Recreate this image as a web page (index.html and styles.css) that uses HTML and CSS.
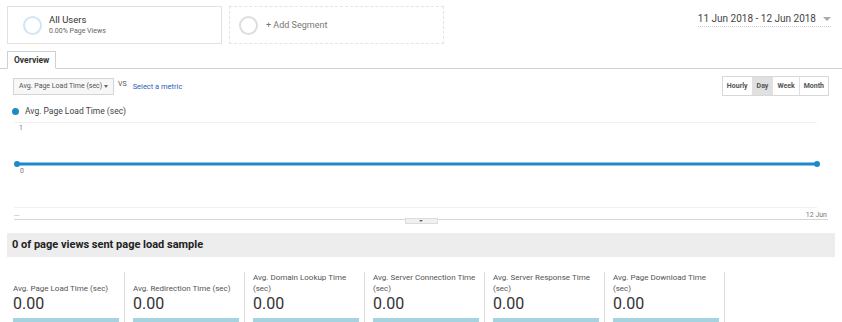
FILE: index.html
```html
<!DOCTYPE html>
<html lang="en">
<head>
  <meta charset="UTF-8">
  <title>Page Timings</title>
  <link rel="stylesheet" href="styles.css">
</head>
<body>
  <div class="header">
    <div class="segments">
      <div class="segment">
        <span class="seg-circle"></span>
        <div>
          <div class="seg-name">All Users</div>
          <div class="seg-sub">0.00% Page Views</div>
        </div>
      </div>
      <div class="segment add">
        <span class="seg-circle grey"></span>
        <div class="seg-add">+ Add Segment</div>
      </div>
    </div>
    <div class="date-range">
      <span>11 Jun 2018 - 12 Jun 2018</span>
      <span class="caret"></span>
    </div>
  </div>

  <div class="tabs">
    <div class="tab">Overview</div>
  </div>

  <div class="controls">
    <div class="metric-pick">
      <div class="select">Avg. Page Load Time (sec) <span class="mini-caret"></span></div>
      <span class="vs">VS</span>
      <a class="link">Select a metric</a>
    </div>
    <div class="periods">
      <button>Hourly</button>
      <button class="active">Day</button>
      <button>Week</button>
      <button>Month</button>
    </div>
  </div>

  <div class="legend">
    <span class="legend-dot"></span>
    Avg. Page Load Time (sec)
  </div>

  <div class="chart">
    <svg width="814" height="106" viewBox="0 0 814 106">
      <line x1="0" y1="3.5" x2="803" y2="3.5" stroke="#f0f0f0" stroke-width="1"/>
      <line x1="0" y1="88.5" x2="803" y2="88.5" stroke="#f0f0f0" stroke-width="1"/>
      <text x="5" y="11" class="axis">1</text>
      <text x="6" y="54" class="axis">0</text>
      <line x1="3" y1="45" x2="803" y2="45" stroke="#1c8ac7" stroke-width="3"/>
      <circle cx="3" cy="45" r="3" fill="#1c8ac7"/>
      <circle cx="803" cy="45" r="3" fill="#1c8ac7"/>
      <text x="0" y="97" class="axis">...</text>
      <text x="813" y="98" class="axis" text-anchor="end">12 Jun</text>
      <line x1="0" y1="100.5" x2="814" y2="100.5" stroke="#d6d6d6" stroke-width="1"/>
      <rect x="391.5" y="99.5" width="32" height="5" fill="#f1f1f1" stroke="#dcdcdc"/>
      <path d="M405 101 L409 101 L407 103 Z" fill="#666"/>
    </svg>
  </div>

  <div class="summary">0 of page views sent page load sample</div>

  <div class="metrics">
    <div class="metric">
      <div class="metric-label">Avg. Page Load Time (sec)</div>
      <div class="metric-value">0.00</div>
      <div class="spark"></div>
    </div>
    <div class="metric">
      <div class="metric-label">Avg. Redirection Time (sec)</div>
      <div class="metric-value">0.00</div>
      <div class="spark"></div>
    </div>
    <div class="metric">
      <div class="metric-label">Avg. Domain Lookup Time (sec)</div>
      <div class="metric-value">0.00</div>
      <div class="spark"></div>
    </div>
    <div class="metric">
      <div class="metric-label">Avg. Server Connection Time (sec)</div>
      <div class="metric-value">0.00</div>
      <div class="spark"></div>
    </div>
    <div class="metric">
      <div class="metric-label">Avg. Server Response Time (sec)</div>
      <div class="metric-value">0.00</div>
      <div class="spark"></div>
    </div>
    <div class="metric">
      <div class="metric-label">Avg. Page Download Time (sec)</div>
      <div class="metric-value">0.00</div>
      <div class="spark"></div>
    </div>
  </div>
</body>
</html>
```

FILE: styles.css
```css
* {
  margin: 0;
  padding: 0;
  box-sizing: border-box;
}

body {
  font-family: Roboto, 'Liberation Sans', sans-serif;
  color: #333;
  background: white;
  width: 842px;
  overflow: hidden;
}

.header {
  display: flex;
  justify-content: space-between;
  align-items: flex-start;
  padding: 6px 11px 0 7px;
  height: 51px;
}

.segments {
  display: flex;
  gap: 7px;
}

.segment {
  width: 215px;
  height: 38px;
  border: 1px solid #e2e2e2;
  display: flex;
  align-items: center;
  padding-left: 15px;
  gap: 7px;
}

.segment.add {
  border: 1px dashed #e4e4e4;
  padding-left: 9px;
  gap: 8px;
}

.seg-circle {
  width: 19px;
  height: 19px;
  border-radius: 50%;
  border: 2px solid #d3e5f3;
}

.seg-circle.grey {
  border-color: #dedede;
}

.seg-name {
  font-size: 9.5px;
  color: #333;
  line-height: 12px;
}

.seg-sub {
  font-size: 7px;
  color: #666;
  line-height: 10px;
}

.seg-add {
  font-size: 9px;
  color: #777;
}

.date-range {
  display: flex;
  align-items: center;
  gap: 7px;
  font-size: 10px;
  color: #444;
  margin-top: 7px;
  padding-bottom: 2px;
  border-bottom: 1px dotted #ccc;
}

.caret {
  width: 0;
  height: 0;
  border-left: 4px solid transparent;
  border-right: 4px solid transparent;
  border-top: 4px solid #aaa;
}

.tabs {
  display: flex;
  align-items: flex-end;
  border-bottom: 1px solid #d0d0d0;
  padding-left: 7px;
  height: 18px;
}

.tab {
  height: 18px;
  margin-bottom: -1px;
  padding: 0 6px;
  font-size: 8.5px;
  font-weight: 700;
  line-height: 16px;
  color: #333;
  border: 1px solid #d0d0d0;
  border-bottom: 1px solid white;
  background: white;
}

.controls {
  display: flex;
  justify-content: space-between;
  align-items: center;
  padding: 7px 13px 0 13px;
}

.metric-pick {
  display: flex;
  align-items: center;
  gap: 4px;
}

.select {
  width: 101px;
  height: 17px;
  border: 1px solid #d4d4d4;
  background: #f7f7f7;
  font-size: 7px;
  white-space: nowrap;
  color: #555;
  display: flex;
  align-items: center;
  justify-content: space-between;
  padding: 0 5px;
}

.mini-caret {
  width: 0;
  height: 0;
  border-left: 2.5px solid transparent;
  border-right: 2.5px solid transparent;
  border-top: 3px solid #666;
}

.vs {
  font-size: 7px;
  color: #555;
  margin-top: -4px;
}

.link {
  font-size: 7.5px;
  color: #2a62b8;
  margin-left: 2px;
}

.periods {
  display: flex;
  border: 1px solid #d8d8d8;
}

.periods button {
  font-family: inherit;
  font-size: 7px;
  font-weight: 700;
  color: #555;
  background: white;
  border: none;
  border-left: 1px solid #e0e0e0;
  height: 18px;
  padding: 0 4px;
}

.periods button:first-child {
  border-left: none;
}

.periods button.active {
  background: #e0e0e0;
}

.legend {
  display: flex;
  align-items: center;
  gap: 6px;
  font-size: 8.5px;
  color: #444;
  padding-left: 12px;
  margin-top: 8px;
  height: 14px;
}

.legend-dot {
  width: 7px;
  height: 7px;
  border-radius: 50%;
  background: #1c8ac7;
}

.chart {
  padding-left: 14px;
  margin-top: 1px;
  height: 106px;
}

.chart svg {
  display: block;
}

.axis {
  font-family: Roboto, 'Liberation Sans', sans-serif;
  font-size: 7px;
  fill: #777;
}

.summary {
  margin: 8px 7px 0 7px;
  height: 24px;
  background: #ededed;
  font-size: 11px;
  font-weight: 700;
  color: #222;
  line-height: 24px;
  padding-left: 5px;
}

.metrics {
  display: flex;
  padding-left: 5px;
  margin-top: 15px;
}

.metric {
  width: 120px;
  border-right: 1px solid #dcdcdc;
  padding: 0 5px 0 8px;
}

.metric-label {
  font-size: 8px;
  line-height: 10.5px;
  color: #555;
  height: 22px;
  display: flex;
  align-items: flex-end;
}

.metric-value {
  font-size: 16px;
  line-height: 19px;
  color: #333;
}

.spark {
  height: 6px;
  margin-top: 5px;
  background: #a6d3e0;
}
```
